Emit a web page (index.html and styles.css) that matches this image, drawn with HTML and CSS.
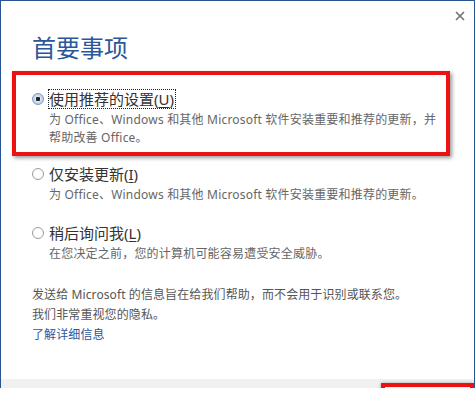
FILE: index.html
```html
<!DOCTYPE html>
<html>
  <head>
    <meta charset="UTF-8">
    <title>首要事项</title>
    <link rel="stylesheet" href="styles.css">
  </head>
  <body>
    <div class="window">
      <div class="titlebar">
        <button class="close" type="button" aria-label="关闭">
          <svg width="10" height="10" viewBox="0 0 10 10">
            <path d="M1 1L9 9M9 1L1 9" stroke="#707070" stroke-width="1.6" fill="none"/>
          </svg>
        </button>
      </div>
      <h1 class="heading">首要事项</h1>
      <div class="options">
        <div class="option flagged">
          <div class="option-row">
            <span class="radio checked"></span>
            <span class="label focus">使用推荐的设置(<u>U</u>)</span>
          </div>
          <div class="desc">为 Office、Windows 和其他 Microsoft 软件安装重要和推荐的更新，并<br>帮助改善 Office。</div>
        </div>
        <div class="option">
          <div class="option-row">
            <span class="radio"></span>
            <span class="label">仅安装更新(<u>I</u>)</span>
          </div>
          <div class="desc">为 Office、Windows 和其他 Microsoft 软件安装重要和推荐的更新。</div>
        </div>
        <div class="option">
          <div class="option-row">
            <span class="radio"></span>
            <span class="label">稍后询问我(<u>L</u>)</span>
          </div>
          <div class="desc">在您决定之前，您的计算机可能容易遭受安全威胁。</div>
        </div>
      </div>
      <div class="note">
        <div>发送给 Microsoft 的信息旨在给我们帮助，而不会用于识别或联系您。</div>
        <div>我们非常重视您的隐私。</div>
        <a class="more" href="#">了解详细信息</a>
      </div>
      <div class="footer">
        <div class="accept-mark"></div>
      </div>
    </div>
  </body>
</html>
```

FILE: styles.css
```css
body {
  background-color: #fff;
  font-family: "Noto Sans", "Noto Sans CJK SC", sans-serif;
  margin: 0;
  padding: 0;
}

.window {
  background-color: #fff;
  border: 1px solid #2b5592;
  border-bottom: none;
  box-sizing: border-box;
  display: flex;
  flex-direction: column;
  height: 388px;
  overflow: hidden;
  width: 475px;
}

.titlebar {
  display: flex;
  height: 30px;
  justify-content: flex-end;
}

.close {
  background: none;
  border: none;
  cursor: pointer;
  height: 10px;
  margin: 10px 9px 0 0;
  padding: 0;
  width: 10px;
}

.close svg {
  display: block;
}

.heading {
  color: #2b579a;
  font-family: "Noto Sans CJK SC", sans-serif;
  font-size: 24px;
  font-weight: normal;
  line-height: 32px;
  margin: 0 0 8px 31px;
}

.options {
  display: flex;
  flex-direction: column;
}

.option {
  padding-left: 31px;
}

.option + .option {
  margin-top: 19px;
}

.option.flagged + .option {
  margin-top: 8px;
}

.option.flagged {
  border: 4px solid #ee1111;
  box-shadow: 2px 2px 4px rgba(0, 0, 0, 0.4);
  margin: 0 24px 0 11px;
  padding: 14px 0 5px 16px;
}

.option-row {
  align-items: center;
  display: flex;
  gap: 5px;
  height: 20px;
}

.radio {
  background-color: #fff;
  border: 1px solid #9a9a9a;
  border-radius: 50%;
  box-sizing: border-box;
  height: 12px;
  width: 12px;
}

.radio.checked {
  background: radial-gradient(circle, #222 0, #222 2px, #dfe8f4 2.5px, #b8cbe4 5px);
  border-color: #7f9cc4;
}

.label {
  color: #333;
  font-size: 15px;
  line-height: 18px;
}

.label.focus {
  border: 1px dotted #222;
  margin-left: -1px;
  padding: 0 1px 0 0;
}

.label u {
  text-underline-offset: 2px;
}

.desc {
  color: #666;
  font-size: 12px;
  letter-spacing: 0.2px;
  line-height: 18px;
  margin-top: 2px;
  padding-left: 17px;
}

.note {
  color: #555;
  font-size: 12px;
  letter-spacing: 0.1px;
  line-height: 20px;
  margin: 22px 0 0 31px;
}

.more {
  color: #2b579a;
  text-decoration: none;
}

.footer {
  background-color: #f0f0f0;
  display: flex;
  flex-shrink: 0;
  height: 9px;
  justify-content: flex-end;
  margin-top: auto;
}

.accept-mark {
  border: 4px solid #ee1111;
  box-shadow: 0 0 3px rgba(0, 0, 0, 0.3);
  box-sizing: border-box;
  flex-shrink: 0;
  height: 20px;
  margin-top: 4px;
  width: 93px;
}
```
